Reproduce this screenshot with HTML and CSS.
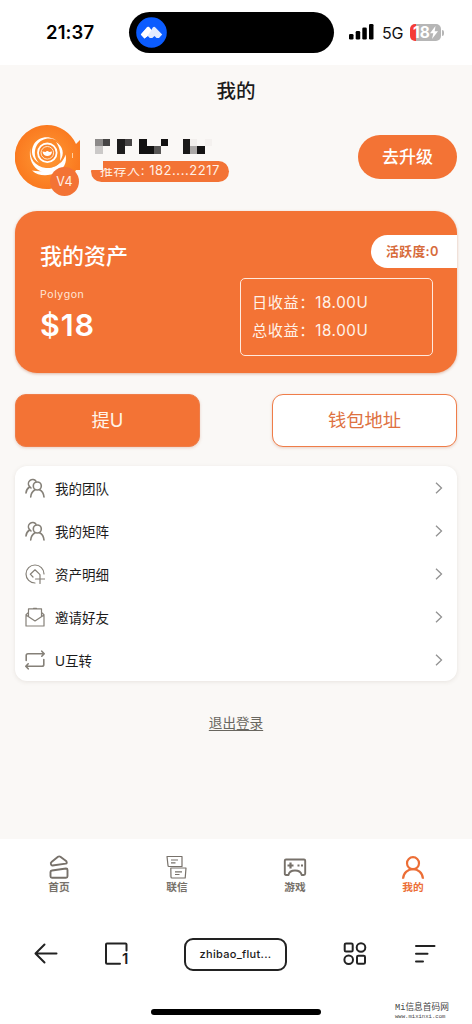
FILE: index.html
```html
<!DOCTYPE html>
<html lang="zh-CN">
<head>
<meta charset="utf-8">
<title>我的</title>
<link rel="stylesheet" href="styles.css">
</head>
<body>
<div class="screen">
  <header class="status">
    <span class="time">21:37</span>
    <div class="island">
      <svg width="31" height="31" viewBox="0 0 31 31"><circle cx="15.500" cy="15.500" r="15.300" fill="#0b5cff"/><path d="M4.800 17.500l6-7q1.200-1.300 2.500 0l2 2.400 1.500-2.300q1.300-1.500 2.600 0l6.800 6.900-3.200 3.600h-2.500l-2-2-2.200 2h-2.500l-2.200-2.300-3 2.600z" fill="#e3ecff"/><path d="M11 10.500q1.200-1.300 2.400 0l2 2.400-4 6.300-3 2.200-3.600-3.900z" fill="#fff"/></svg>
    </div>
    <svg class="signal" width="25" height="16" viewBox="0 0 25 16"><rect x="0" y="10" width="4.500" height="5.500" rx="1.300"/><rect x="6.700" y="7" width="4.500" height="8.500" rx="1.300"/><rect x="13.300" y="3.500" width="4.500" height="12" rx="1.300"/><rect x="20" y="0" width="4.500" height="15.500" rx="1.300"/></svg>
    <span class="network">5G</span>
    <div class="battery"><span>18</span><svg width="8" height="13" viewBox="0 0 8 13"><path d="M5.500 0L0 7.300h3.300L2 13l6-7.700H4.700z" fill="#fff"/></svg></div>
    <i class="battery-tip"></i>
  </header>

  <main class="page">
    <h1 class="title">我的</h1>

    <section class="profile">
      <div class="avatar">
        <svg width="66" height="66" viewBox="0 0 66 66">
          <defs><radialGradient id="sun"><stop offset="0" stop-color="#ff9a35"/><stop offset="1" stop-color="#fa7a20"/></radialGradient></defs>
          <path d="M32 0A32 32 0 1 0 61 45h4V15l-4 4A32 32 0 0 0 32 0z" fill="url(#sun)"/>
          <path d="M45 19C39 11 27 12 22 20c-4 7-2 14 2 18-7-4-9-12-5-19C24 11 37 9 45 19z" fill="#fff"/>
          <path d="M15.500 23C14 33 20 42 31 43c6 .5 12-2 15-6-3 8-13 13-21 9-7-3-12-13-9.500-23z" fill="#fff"/>
          <path d="M17 45.500c7 1.500 14 1 20-2 7-3 12-8 13.500-14 2 8-2 15-9 18-8 4-18 4-24.500-2z" fill="#fff"/>
          <path d="M41 17c7 4 9 12 4 19 1-7 0-13-4-19z" fill="#fff"/>
          <circle cx="32.300" cy="27.800" r="9.300" fill="#fa842b" stroke="#fff" stroke-width="1.800"/>
          <circle cx="32.300" cy="27.800" r="6.300" fill="none" stroke="#ffe9cc" stroke-width="1"/>
          <path d="M27.500 26.500l3 .6q1.800-2.200 3.600 0l3-.6c-.5 6-9 6-9.600 0z" fill="#fff"/>
          <path d="M57.500 28v5" stroke="#ffd0a0"/>
        </svg>
        <span class="level">V4</span>
      </div>
      <div class="identity">
        <svg class="mosaic" width="120" height="16" viewBox="0 0 120 16" shape-rendering="crispEdges">
          <path d="M0 0h8v7H0z" fill="#8c8a89"/><path d="M8 0h7v7H8z" fill="#464545"/><path d="M0 7h8v8H0z" fill="#cbc9c8"/>
          <path d="M22 0h8v15h-8z" fill="#1e1d1d"/><path d="M30 0h7v7h-7z" fill="#474545"/>
          <path d="M44 0h8v7h7v8H44zM66 0h7v7h-7z" fill="#121111"/><path d="M59 7h7v8h-7z" fill="#575554"/>
          <path d="M88 0h7v15h-7z" fill="#1a1919"/><path d="M95 0h7v7h-7z" fill="#f1eeec"/><path d="M95 7h7v8h-7z" fill="#aaa7a6"/><path d="M102 7h8v8h-8z" fill="#151414"/><path d="M110 0h7v7h-7z" fill="#f4f1ef"/>
        </svg>
        <div class="referrer">推荐人: 182....2217<i class="mask-light"></i><i class="mask-orange"></i></div>
      </div>
      <button class="upgrade">去升级</button>
    </section>

    <section class="assets">
      <div class="balance">
        <h2>我的资产</h2>
        <span class="chain">Polygon</span>
        <strong>$18</strong>
      </div>
      <div class="earnings">
        <span class="activity">活跃度:0</span>
        <div class="income"><span>日收益：18.00U</span><span>总收益：18.00U</span></div>
      </div>
    </section>

    <section class="actions">
      <button class="action filled">提U</button>
      <button class="action">钱包地址</button>
    </section>

    <nav class="menu">
      <a class="row"><svg class="icon" viewBox="0 0 20 20"><use href="#people"/></svg><span>我的团队</span><svg class="chevron" viewBox="0 0 8 12"><path d="M1 .8l5.500 5.200L1 11.200"/></svg></a>
      <a class="row"><svg class="icon" viewBox="0 0 20 20"><g id="people"><path d="M4.300 8.300A4.100 4.100 0 1 1 11 3.200M4.300 8.300L6 10M4.500 9C2.300 10.500 1.200 12.500 1 15"/><circle cx="12.300" cy="8" r="4"/><path d="M5.700 19c.3-4 2-6 4.300-7.300M14.500 11.700c2.600 1.300 4.200 3.600 4.500 7.300"/></g></svg><span>我的矩阵</span><svg class="chevron" viewBox="0 0 8 12"><path d="M1 .8l5.500 5.200L1 11.200"/></svg></a>
      <a class="row"><svg class="icon thin" viewBox="0 0 20 20"><path d="M10 19A9 9 0 1 1 19 10M8 13L5.300 10.200 10 5.800l4.500 4.300M10.500 15h9M15 10.500v9"/></svg><span>资产明细</span><svg class="chevron" viewBox="0 0 8 12"><path d="M1 .8l5.500 5.200L1 11.200"/></svg></a>
      <a class="row"><svg class="icon thin" viewBox="0 0 20 20"><path d="M3.500 9.500V1.800h13v7.700M3.500 5.500L1 7.800v11.200h18V7.800L16.500 5.500M1 8L10 14 19 8M8.500 1.300h3"/></svg><span>邀请好友</span><svg class="chevron" viewBox="0 0 8 12"><path d="M1 .8l5.500 5.200L1 11.200"/></svg></a>
      <a class="row"><svg class="icon" viewBox="0 0 20 20"><path d="M1.200 10.500V5.500Q1.200 3.700 3 3.700H19M16.800 1.200l2.400 2.500-2.400 2.500M18.800 9.500v5q0 1.800-1.800 1.800H1M3.200 13.800L.8 16.300l2.400 2.500"/></svg><span>U互转</span><svg class="chevron" viewBox="0 0 8 12"><path d="M1 .8l5.500 5.200L1 11.200"/></svg></a>
    </nav>

    <a class="logout">退出登录</a>
  </main>

  <nav class="tabs">
    <a class="tab"><svg width="24" height="26" viewBox="0 0 24 26"><path d="M4 10.300q-.6-1.500.5-2.300L11 2.800q1.200-.9 2.400 0l6 4.500q1 2-.7 2.300L5.500 11.500q-1.100.1-1.500-1.200zM5 16.500l14-2q1.500 0 1.500 1.500v6.300q0 1.500-1.500 1.500H5q-1.500 0-1.500-1.500V18q0-1.300 1.500-1.500z"/></svg><span>首页</span></a>
    <a class="tab"><svg class="fine" width="24" height="26" viewBox="0 0 24 26"><path d="M2 2.500h15v10H4q-1 0-1-1zM5.800 14h15.200l-.8 10H7q-1 0-1-1zM6 6h7M6 8.800h4.500M10 17.800h7M10 20.500h4.500"/></svg><span>联信</span></a>
    <a class="tab"><svg width="24" height="26" viewBox="0 0 24 26"><path d="M3 5.500h18q1.200 0 1.200 1.200v12.800q0 1.500-1.500 1.500h-2q-1-4.500-6.700-4.500T5.500 21H3q-1.200 0-1.200-1.200V6.700Q1.800 5.500 3 5.500z"/><path class="keys" d="M7.500 8.500v6M4.500 11.500h6M14.500 11.500h2M18 11.500h2"/></svg><span>游戏</span></a>
    <a class="tab active"><svg width="24" height="26" viewBox="0 0 24 26"><circle cx="12" cy="9.200" r="6"/><path d="M2 24.800c.8-12.800 19.200-12.800 20 0"/></svg><span>我的</span></a>
  </nav>

  <footer class="browser">
    <div class="tools">
      <svg width="24" height="24" viewBox="0 0 24 24"><path d="M22.500 11.500H2M10.500 2.500L1.500 11.500l9 9"/></svg>
      <div class="pages"><svg width="24" height="24" viewBox="0 0 24 24"><path d="M21.500 8.500V2.500q0-1-1-1H2q-1 0-1 1v18.200q0 1 1 1h13"/></svg><b>1</b></div>
      <div class="address">zhibao_flut...</div>
      <svg class="apps" width="24" height="24" viewBox="0 0 24 24"><rect x="1.700" y="1.500" width="8" height="8" rx="1.300"/><circle cx="18" cy="5.500" r="4.300"/><circle cx="5.700" cy="17.800" r="4.300"/><rect x="14" y="13.800" width="8" height="8" rx="1.300"/></svg>
      <svg class="more" width="24" height="24" viewBox="0 0 24 24"><path d="M2 4h18.500M2 11.800h11.500M2 19.500h7"/></svg>
    </div>
    <div class="bottom"><i class="home-bar"></i><div class="site"><span>Mi信息首码网</span><small>www.mixinxi.com</small></div></div>
  </footer>
</div>
</body>
</html>
```
FILE: styles.css
```css
* { box-sizing: border-box; }
body { margin: 0; background: #fff; font-family: Inter, "Noto Sans CJK SC", sans-serif; color: #1c1b1b; }
h1, h2 { margin: 0; }
button { font-family: inherit; padding: 0; border: 0; }
svg { display: block; flex: none; }
i { display: block; }
.screen { width: 472px; height: 1024px; display: flex; flex-direction: column; overflow: hidden; }

.status { height: 65px; flex: none; display: flex; align-items: center; padding-left: 46px; }
.time { width: 83px; font-size: 18.500px; font-weight: 600; letter-spacing: .1px; color: #000; line-height: 22px; padding-bottom: 1px; }
.island { width: 205px; height: 41px; border-radius: 21px; background: #000; padding: 5px 7px; }
.signal { margin-left: 15px; margin-top: -1px; }
.network { width: 28px; margin-left: 8px; font-size: 16px; letter-spacing: -.2px; color: #111; }
.battery { width: 31px; height: 17px; margin: -1px 0 0 0; border-radius: 5px; background: linear-gradient(90deg, #f43c36 6px, #b6b6b6 6px); display: flex; align-items: center; justify-content: center; color: #fff; font-size: 15.500px; font-weight: 700; line-height: 17px; }
.battery-tip { width: 2px; height: 6px; margin-left: 1px; border-radius: 0 2px 2px 0; background: #b6b6b6; }

.page { height: 774px; flex: none; background: #faf8f6; padding: 0 15px; display: flex; flex-direction: column; }
.title { height: 52px; font-size: 19.500px; line-height: 52px; font-weight: 500; text-align: center; }
.profile { height: 94px; padding-top: 8px; display: flex; align-items: flex-start; }
.avatar { position: relative; width: 76px; }
.level { position: absolute; left: 35px; top: 42px; width: 29px; height: 29px; border-radius: 50%; background: #f37335; color: #fff0e5; font-size: 12.500px; line-height: 29px; text-align: center; }
.identity { width: 138px; padding-top: 14px; }
.mosaic { margin-left: 4px; }
.referrer { position: relative; height: 21px; margin-top: 6px; border-radius: 11px; background: #f37335; color: #fff0e5; font-size: 13px; line-height: 19px; letter-spacing: .55px; padding-left: 9px; white-space: nowrap; }
.mask-light, .mask-orange { position: absolute; top: 0; }
.mask-light { left: 0; width: 12px; height: 9px; background: #faf8f6; }
.mask-orange { left: 12px; width: 40px; height: 7px; background: #f37335; }
.upgrade { width: 99px; height: 44px; margin: 10px 0 0 auto; border-radius: 22px; background: #f37335; color: #fff; font-size: 17px; font-weight: 500; line-height: 44px; }

.assets { height: 162px; border-radius: 22px; background: #f37335; color: #fff; box-shadow: 0 1px 3px #b8582c66; display: flex; justify-content: space-between; padding: 24px 0 0 25px; }
.balance { display: flex; flex-direction: column; }
.balance h2 { font-size: 22px; line-height: 42px; font-weight: 500; }
.chain { margin-top: 9px; font-size: 10.500px; line-height: 17px; letter-spacing: .6px; color: #ffe6d8; }
.balance strong { font-size: 30.500px; line-height: 44px; font-weight: 600; letter-spacing: .9px; }
.earnings { display: flex; flex-direction: column; width: 217px; }
.activity { align-self: flex-end; width: 86px; height: 33px; border-radius: 17px 0 0 17px; background: #fff; color: #d76b3b; font-size: 12.800px; line-height: 33px; font-weight: 600; letter-spacing: .4px; padding-left: 15px; }
.income { width: 193px; height: 78px; margin-top: 10px; border: 1.500px solid #ffe9dc; border-radius: 5px; padding: 10px 0 0 11px; display: flex; flex-direction: column; font-size: 15.200px; line-height: 27.500px; letter-spacing: .6px; color: #fff2e8; white-space: nowrap; }

.actions { margin-top: 21px; display: flex; justify-content: space-between; }
.action { width: 185px; height: 53px; border: 1px solid #ef7d49; border-radius: 11px; background: #fff; color: #de713f; font-size: 18.300px; line-height: 51px; box-shadow: 0 1px 3px #bb673f44; }
.filled { background: #f37335; color: #fff3e9; }

.menu { height: 215px; margin-top: 19px; border-radius: 12px; background: #fff; box-shadow: 0 1px 4px #6650401f; }
.row { height: 43px; display: flex; align-items: center; padding: 1px 14px 0 10px; }
.row span { margin-left: 10px; font-size: 13.500px; }
.icon { width: 20px; height: 20px; fill: none; stroke: #858078; stroke-width: 1.600; stroke-linecap: round; stroke-linejoin: round; }
.thin { stroke-width: 1.200; }
.chevron { width: 8px; height: 12px; margin-left: auto; fill: none; stroke: #929292; stroke-width: 1.300; }
.logout { align-self: center; margin-top: 32px; font-size: 13.600px; line-height: 20px; color: #68665f; text-decoration: underline; text-underline-offset: 2px; }

.tabs { height: 76px; flex: none; display: flex; padding-top: 15px; }
.tab { width: 118px; display: flex; flex-direction: column; align-items: center; font-size: 10.700px; line-height: 15px; font-weight: 600; color: #77716a; }
.tab svg { fill: none; stroke: #77716a; stroke-width: 1.900; stroke-linejoin: round; }
.tab .fine { stroke-width: 1.200; }
.tab .keys { stroke-width: 2.200; }
.active { color: #ec6e36; }
.active svg { stroke: #ec6e36; stroke-width: 2.200; }

.browser { height: 109px; flex: none; }
.tools { height: 78px; padding-left: 34px; display: flex; align-items: center; }
.tools svg { fill: none; stroke: #222; stroke-width: 2; stroke-linecap: round; stroke-linejoin: round; }
.pages { position: relative; margin-left: 47px; }
.pages b { position: absolute; left: 17px; top: 9px; font-size: 15px; line-height: 15px; font-weight: 600; }
.address { width: 103px; height: 33px; margin-left: 55px; border: 2px solid #222; border-radius: 9px; font-size: 11px; line-height: 29px; font-weight: 500; text-align: center; letter-spacing: .3px; }
.apps { margin-left: 56px; }
.more { margin-left: 47px; }
.bottom { display: flex; align-items: flex-start; }
.home-bar { width: 170px; height: 6px; margin: 16px 0 0 151px; border-radius: 3px; background: #000; }
.site { margin: 9px 0 0 74px; display: flex; flex-direction: column; color: #444; white-space: nowrap; }
.site span { font: 8.700px/12px "Liberation Mono", "Noto Sans CJK SC", monospace; }
.site small { font: 5.600px/6px "Liberation Mono", monospace; }
```
